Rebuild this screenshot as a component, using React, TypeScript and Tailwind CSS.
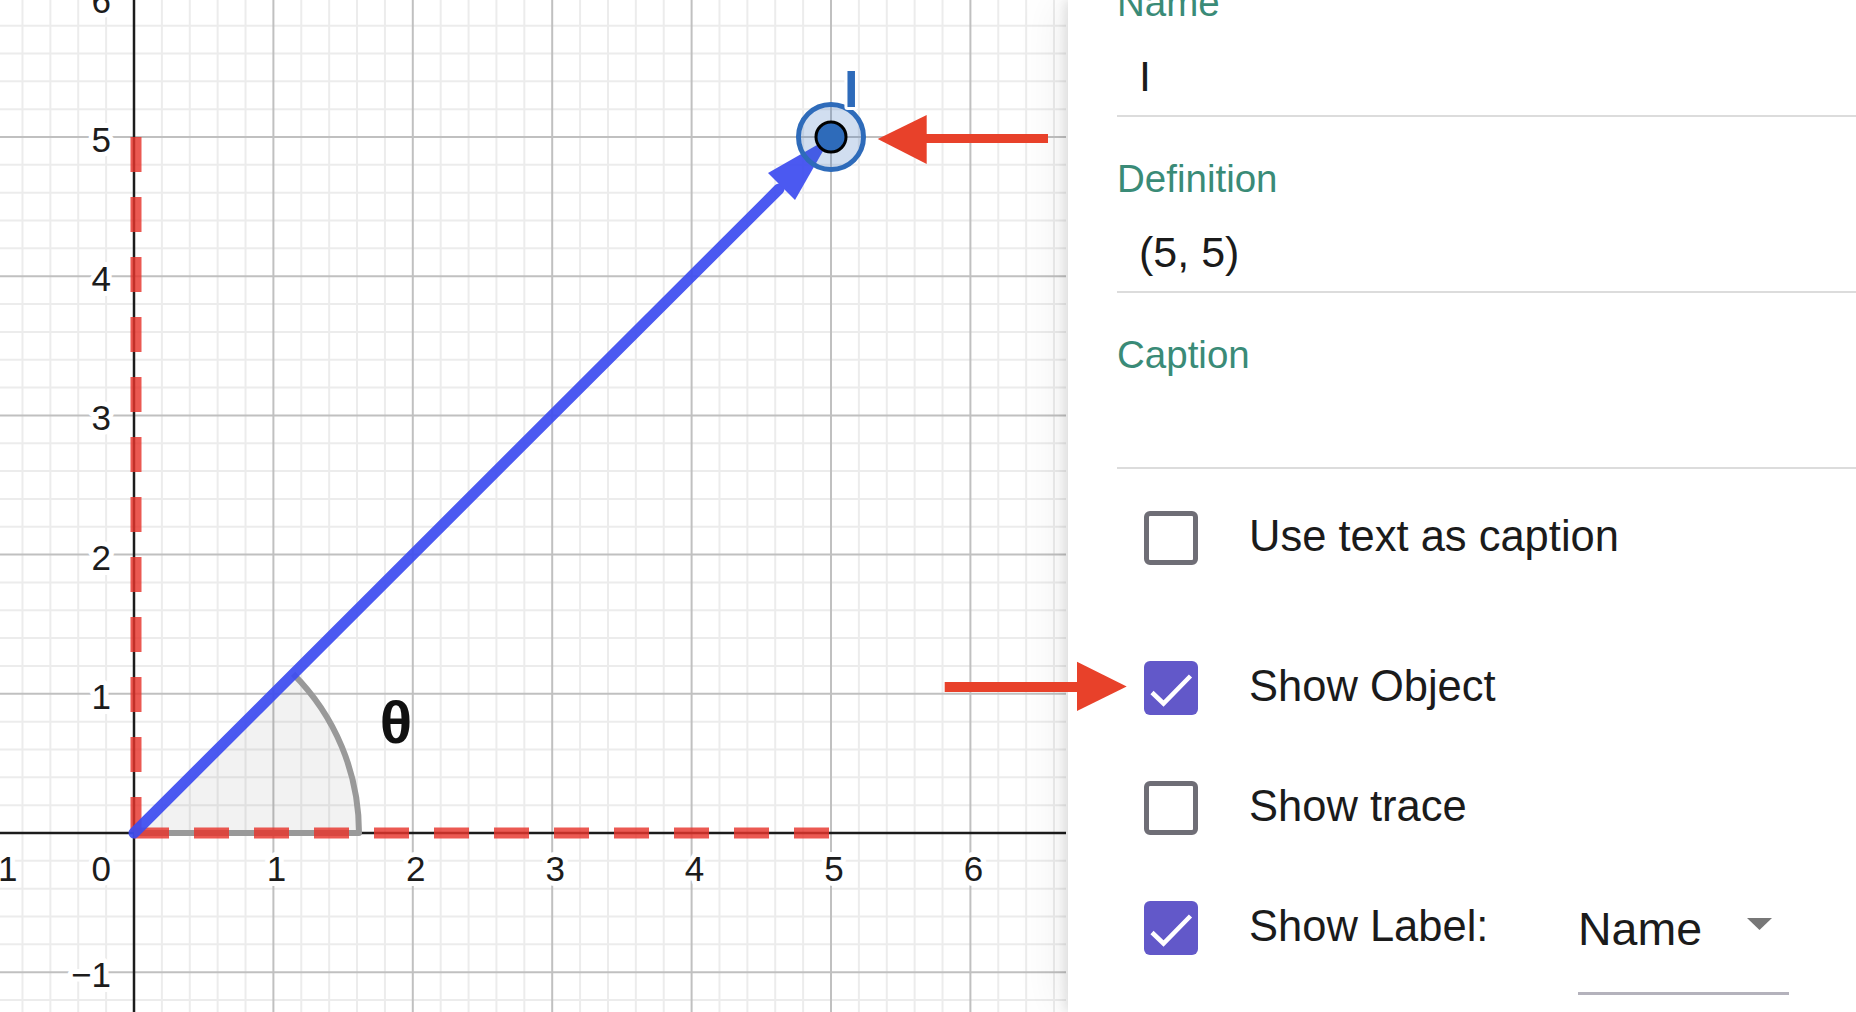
import React from "react";

// graph frame (px)
const OX = 134;
const OY = 833;
const UX = 139.4;
const UY = 139.2;
const GW = 1068;
const GH = 1012;

const sx = (v: number) => OX + v * UX;
const sy = (v: number) => OY - v * UY;

function Graph() {
  const minorV: number[] = [];
  const majorV: number[] = [];
  for (let k = -6; k <= 40; k++) {
    const x = OX + (k * UX) / 5;
    if (x < 0 || x > GW - 2) continue;
    if (k === 0) continue;
    (k % 5 === 0 ? majorV : minorV).push(x);
  }
  const minorH: number[] = [];
  const majorH: number[] = [];
  for (let k = -10; k <= 32; k++) {
    const y = OY - (k * UY) / 5;
    if (y < -2 || y > GH + 2) continue;
    if (k === 0) continue;
    (k % 5 === 0 ? majorH : minorH).push(y);
  }

  const r = 225;
  const ax = OX + r * Math.SQRT1_2;
  const ay = OY - r * Math.SQRT1_2;
  const tip = { x: sx(5), y: sy(5) };

  const labelStyle = {
    paintOrder: "stroke" as const,
    stroke: "#fff",
    strokeWidth: 10,
    strokeLinejoin: "round" as const,
  };

  return (
    <svg width={GW} height={GH} className="block">
      <rect width={GW} height={GH} fill="#fff" />
      {minorV.map((x) => (
        <line key={"mv" + x} x1={x} y1={0} x2={x} y2={GH} stroke="#ececec" strokeWidth={2} />
      ))}
      {minorH.map((y) => (
        <line key={"mh" + y} x1={0} y1={y} x2={GW - 2} y2={y} stroke="#ececec" strokeWidth={2} />
      ))}
      {majorV.map((x) => (
        <line key={"Mv" + x} x1={x} y1={0} x2={x} y2={GH} stroke="#c0c0c0" strokeWidth={2} />
      ))}
      {majorH.map((y) => (
        <line key={"Mh" + y} x1={0} y1={y} x2={GW - 2} y2={y} stroke="#c0c0c0" strokeWidth={2} />
      ))}

      {/* axes */}
      <line x1={0} y1={OY} x2={GW - 2} y2={OY} stroke="#1c1c1c" strokeWidth={2.5} />
      <line x1={OX} y1={0} x2={OX} y2={GH} stroke="#1c1c1c" strokeWidth={2.5} />

      {/* tick labels */}
      <g fontSize={35} fill="#1c1c1c" style={labelStyle}>
        {[1, 2, 3, 4, 5, 6].map((v) => (
          <text key={"x" + v} x={sx(v) + 3} y={881} textAnchor="middle">
            {v}
          </text>
        ))}
        <text x={sx(-1) + 3} y={881} textAnchor="middle">
          −1
        </text>
        <text x={111} y={881} textAnchor="end">
          0
        </text>
        {[-1, 1, 2, 3, 4, 5, 6].map((v) => (
          <text key={"y" + v} x={111} y={sy(v) + 15} textAnchor="end">
            {v < 0 ? "−" + Math.abs(v) : v}
          </text>
        ))}
      </g>

      {/* angle */}
      <path
        d={`M${OX} ${OY} L${OX + r} ${OY} A${r} ${r} 0 0 0 ${ax} ${ay} Z`}
        fill="rgba(0,0,0,0.05)"
      />
      <path
        d={`M${OX} ${OY} L${OX + r} ${OY} A${r} ${r} 0 0 0 ${ax} ${ay}`}
        fill="none"
        stroke="#999"
        strokeWidth={6}
        strokeLinejoin="round"
      />
      <text x={396} y={743} textAnchor="middle" fontSize={60} fontWeight={700} fill="#111">
        θ
      </text>

      {/* components */}
      <g stroke="rgba(230,52,44,0.82)" strokeWidth={11} strokeDasharray="35 25">
        <line x1={OX} y1={OY} x2={sx(5)} y2={OY} />
        <line x1={OX + 2} y1={sy(5)} x2={OX + 2} y2={OY} />
      </g>

      {/* vector */}
      <g opacity={0.93}>
        <line
          x1={OX}
          y1={OY}
          x2={tip.x - 52}
          y2={tip.y + 52}
          stroke="#3e4df0"
          strokeWidth={11}
          strokeLinecap="round"
        />
        <polygon
          points={`${tip.x},${tip.y} ${tip.x - 49.5 - 13.5},${tip.y + 49.5 - 13.5} ${tip.x - 49.5 + 13.5},${tip.y + 49.5 + 13.5}`}
          fill="#3e4df0"
        />
      </g>

      {/* point */}
      <circle cx={tip.x} cy={tip.y} r={32.5} fill="rgba(46,107,186,0.22)" stroke="#2e6bba" strokeWidth={5} />
      <circle cx={tip.x} cy={tip.y} r={15} fill="#2e6bba" stroke="#000" strokeWidth={3} />
      <text
        x={844}
        y={107}
        fontSize={52}
        fontWeight={700}
        fill="#2e6bba"
        style={{ paintOrder: "stroke", stroke: "#fff", strokeWidth: 6, strokeLinejoin: "round" }}
      >
        I
      </text>
    </svg>
  );
}

function Field({ label, value }: { label: string; value?: string }) {
  return (
    <div className="border-b-2 border-[#dcdcdc] pt-[37px] pb-[9px]">
      <div className="h-[50px] text-[38.5px] leading-[50px] text-[#3a8b77]">{label}</div>
      <div className="mt-[18px] h-[60px] pl-[22px] text-[43px] leading-[60px] text-[#1b1b1b]">
        {value}
      </div>
    </div>
  );
}

function Box({ checked }: { checked: boolean }) {
  if (checked) {
    return (
      <div className="h-[54px] w-[54px] shrink-0 rounded-[6px] bg-[#6258c9]">
        <svg width={54} height={54} viewBox="0 0 54 54" className="block">
          <polyline
            points="8,31.5 19.5,42.5 46.5,15"
            fill="none"
            stroke="#fff"
            strokeWidth={4.5}
          />
        </svg>
      </div>
    );
  }
  return <div className="h-[54px] w-[54px] shrink-0 rounded-[6px] border-[5px] border-[#6f6e76]" />;
}

function CheckRow({
  checked,
  label,
  className = "h-[120px]",
  labelWidth,
  children,
}: {
  checked: boolean;
  label: string;
  className?: string;
  labelWidth?: string;
  children?: React.ReactNode;
}) {
  return (
    <div className={"flex items-center pl-[27px] " + className}>
      <Box checked={checked} />
      <span
        className={
          "-mt-[5px] ml-[51px] shrink-0 text-[43.5px] leading-[60px] text-[#1b1b1b] " + (labelWidth ?? "")
        }
      >
        {label}
      </span>
      {children}
    </div>
  );
}

export default function App() {
  return (
    <div className="relative flex h-[1012px] w-[1856px] overflow-hidden bg-white font-['Liberation_Sans',Arial,sans-serif]">
      <div className="w-[1068px] shrink-0">
        <Graph />
      </div>

      <div className="relative z-10 flex-1 bg-white pl-[49px] shadow-[-3px_0_10px_rgba(0,0,0,0.10),-14px_0_40px_rgba(0,0,0,0.06)]">
        <div className="-mt-[59px]">
          <Field label="Name" value="I" />
          <Field label="Definition" value="(5, 5)" />
          <Field label="Caption" />
        </div>

        <div className="pt-[10px]">
          <CheckRow checked={false} label="Use text as caption" className="mb-[31px] h-[118px]" />
          <CheckRow checked label="Show Object" />
          <CheckRow checked={false} label="Show trace" />
          <CheckRow checked label="Show Label:" labelWidth="w-[329px]">
            <div className="flex h-[134px] w-[211px] shrink-0 items-end border-b-[3px] border-[#b4b2bc] pb-[33px]">
              <span className="text-[46.5px] leading-[60px] text-[#1b1b1b]">Name</span>
              <svg width={25} height={12} viewBox="0 0 25 12" className="mb-[29px] ml-auto mr-[17px] block">
                <polygon points="0,0 25,0 12.5,12" fill="#777" />
              </svg>
            </div>
          </CheckRow>
        </div>
      </div>

      {/* annotation arrows */}
      <svg className="pointer-events-none absolute inset-0 z-20" width={1856} height={1012}>
        <g fill="#e8412a">
          <rect x={924} y={134} width={124} height={9} />
          <polygon points="877.7,139 926.7,115 926.7,164" />
          <rect x={944.7} y={682} width={134} height={10} />
          <polygon points="1077,661.7 1126.7,686.5 1077,711" />
        </g>
      </svg>
    </div>
  );
}
